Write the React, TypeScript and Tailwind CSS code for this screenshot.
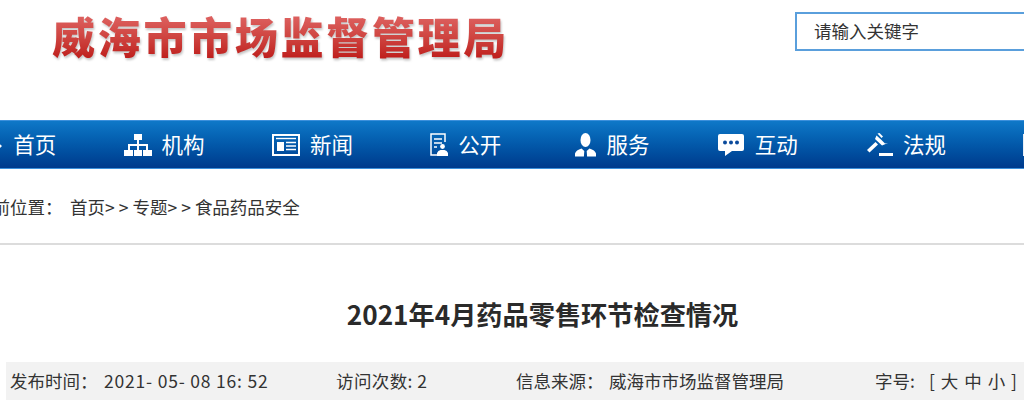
import React from "react";

const cjk = { fontFamily: '"Noto Sans CJK SC", "Noto Sans", sans-serif' };

const HomeIcon = () => (
  <svg viewBox="0 0 28 24" className="w-[28px] h-[24px]" fill="#fff">
    <path d="M14 2 L1 13 L3 15 L14 6 L25 15 L27 13 Z" />
    <path d="M5 15 L14 8 L23 15 V23 H17 V17 H11 V23 H5 Z" />
  </svg>
);
const OrgIcon = () => (
  <svg viewBox="0 0 28 22" className="w-[28px] h-[22px]" fill="#fff">
    <rect x="10" y="0" width="8" height="6" />
    <rect x="13" y="6" width="2" height="5" />
    <rect x="4" y="10" width="20" height="2" />
    <rect x="4" y="10" width="2" height="6" />
    <rect x="13" y="10" width="2" height="6" />
    <rect x="22" y="10" width="2" height="6" />
    <rect x="0" y="16" width="9" height="6" />
    <rect x="10" y="16" width="8" height="6" />
    <rect x="19" y="16" width="9" height="6" />
  </svg>
);
const NewsIcon = () => (
  <svg viewBox="0 0 28 22" className="w-[28px] h-[22px]" fill="none" stroke="#fff">
    <path d="M1 1 H27 V21 H1 Z" strokeWidth="2" />
    <path d="M4 4.5 H24" strokeWidth="1.4" />
    <rect x="5" y="8" width="7" height="9" fill="#fff" stroke="none" />
    <path d="M14 8.5 H24 M14 12 H24 M14 15.5 H24" strokeWidth="1.5" />
  </svg>
);
const PublicIcon = () => (
  <svg viewBox="0 0 18 24" className="w-[18px] h-[24px]" fill="none" stroke="#fff">
    <path d="M7 22 H1 V1 H15 V9" strokeWidth="1.5" />
    <path d="M4 6 H12 M4 10 H12 M4 14 H7" strokeWidth="1.4" />
    <circle cx="12.5" cy="13.5" r="2.4" fill="#fff" stroke="none" />
    <path d="M7 23 V20 Q8 17.5 10.5 17 H14.5 Q17 17.5 18 20 V23 Z" fill="#fff" stroke="none" />
  </svg>
);
const ServiceIcon = () => (
  <svg viewBox="0 0 21 24" className="w-[21px] h-[24px]" fill="#fff">
    <ellipse cx="10.5" cy="7" rx="5" ry="7" />
    <path d="M0 23.5 V20.5 Q1 17 6.5 15.5 L9.3 18 L8.9 23.5 Z M21 23.5 V20.5 Q20 17 14.5 15.5 L11.7 18 L12.1 23.5 Z" />
  </svg>
);
const ChatIcon = () => (
  <svg viewBox="0 0 28 24" className="w-[28px] h-[24px]">
    <path d="M3 1 H25 Q27 1 27 3 V16 Q27 18 25 18 H15 L8 23 V18 H3 Q1 18 1 16 V3 Q1 1 3 1 Z" fill="#fff" />
    <circle cx="8" cy="9.5" r="2" fill="#0a4a9c" />
    <circle cx="14" cy="9.5" r="2" fill="#0a4a9c" />
    <circle cx="20" cy="9.5" r="2" fill="#0a4a9c" />
  </svg>
);
const GavelIcon = () => (
  <svg viewBox="0 0 26 24" className="w-[26px] h-[24px]" fill="#fff">
    <path d="M10.5 0.5 L12.5 0 L16 3.5 L14.5 5 Z" />
    <path d="M9.5 2.5 L14.5 7 L18 10.5 L21 10 L15 12.5 L8 6 Z" />
    <path d="M8.5 9 L11 11.5 L2.5 19.5 L0 17 Z" />
    <rect x="12" y="20" width="14" height="3" />
  </svg>
);
const DocIcon = () => (
  <svg viewBox="0 0 18 22" className="w-[18px] h-[22px]" fill="none" stroke="#e8eef6" strokeWidth="3">
    <path d="M1.5 1.5 H24 V20.5 H1.5 Z" />
  </svg>
);

const navItems: [React.ReactNode, string][] = [
  [<HomeIcon />, "首页"],
  [<OrgIcon />, "机构"],
  [<NewsIcon />, "新闻"],
  [<PublicIcon />, "公开"],
  [<ServiceIcon />, "服务"],
  [<ChatIcon />, "互动"],
  [<GavelIcon />, "法规"],
  [<DocIcon />, ""],
];

export default function App() {
  return (
    <div className="w-[1024px] h-[411px] overflow-hidden bg-white text-[#333]" style={cjk}>
      <header className="h-[120px] flex items-start">
        <div className="w-[795px] shrink-0 pl-[52px] pt-[9px]">
          <h1 className="text-[43px] leading-[52px] font-black tracking-[2.7px] whitespace-nowrap w-fit bg-gradient-to-b from-[#e26a6a] to-[#bd1515] bg-clip-text text-transparent [filter:drop-shadow(1px_2px_1px_rgba(90,90,90,0.35))]">
            威海市市场监督管理局
          </h1>
        </div>
        <div className="mt-[12px] w-[260px] h-[39px] shrink-0 border-2 border-[#5a9fdc] flex items-center pl-[17px] text-[17.5px] text-[#333]">
          请输入关键字
        </div>
      </header>

      <nav className="h-[49px] flex items-center -ml-[92px] w-[1300px] bg-gradient-to-b from-[#0f78c8] to-[#003a8c] border-y border-[#3c90dc]">
        {navItems.map(([icon, label], i) => (
          <div key={i} className="w-[148.3px] shrink-0 flex justify-end items-center gap-[10px] text-white text-[21.5px]">
            {icon}
            <span className="w-[43px] whitespace-nowrap">{label}</span>
          </div>
        ))}
      </nav>

      <div className="h-[76px] flex items-center -ml-[25px] pt-[3px] text-[17.5px] text-[#333] border-b-2 border-[#dcdcdc] whitespace-nowrap">
        <span className="w-[95px]">当前位置：</span>
        <span>首页</span>
        <span className="tracking-[4px]">&gt;&gt;</span>
        <span>专题</span>
        <span className="tracking-[4px]">&gt;&gt;</span>
        <span>食品药品安全</span>
      </div>

      <h2 className="mt-[51px] pl-[61px] text-center text-[26.2px] leading-[36px] font-bold text-[#2a2a2a] h-[36px]">
        2021年4月药品零售环节检查情况
      </h2>

      <div className="mt-[30px] ml-[6px] h-[38px] bg-[#f2f2f2] flex items-center text-[17.5px] text-[#333] whitespace-nowrap pl-[4px]">
        <span className="w-[94px]">发布时间：</span>
        <span className="w-[232px] tracking-[0.8px]">2021- 05- 08 16: 52</span>
        <span className="w-[180px] tracking-[0.4px]">访问次数: 2</span>
        <span className="w-[93px]">信息来源：</span>
        <span className="w-[266px]">威海市市场监督管理局</span>
        <span className="w-[54px]">字号:</span>
        <span className="tracking-[1px]">[ 大 中 小 ]</span>
      </div>
    </div>
  );
}
